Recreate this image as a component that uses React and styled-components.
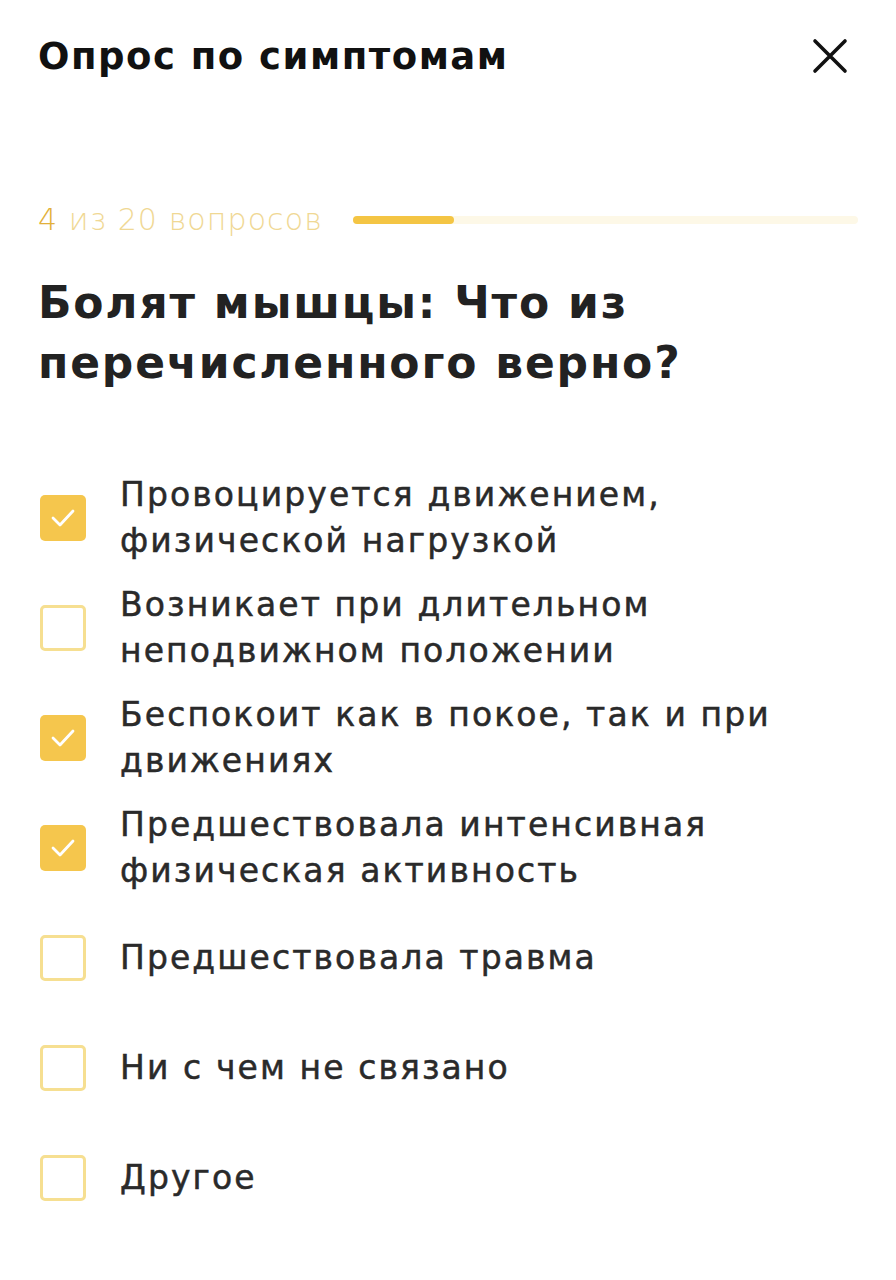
import React from 'react';
import styled, { createGlobalStyle } from 'styled-components';

const GlobalStyle = createGlobalStyle`
  body {
    margin: 0;
    background: #ffffff;
    font-family: "DejaVu Sans", Inter, sans-serif;
  }
`;

const options = [
  { text: 'Провоцируется движением,\nфизической нагрузкой', checked: true },
  { text: 'Возникает при длительном\nнеподвижном положении', checked: false },
  { text: 'Беспокоит как в покое, так и при\nдвижениях', checked: true },
  { text: 'Предшествовала интенсивная\nфизическая активность', checked: true },
  { text: 'Предшествовала травма', checked: false },
  { text: 'Ни с чем не связано', checked: false },
  { text: 'Другое', checked: false },
];

const App = () => (
  <>
    <GlobalStyle />
    <Page>
      <Header>
        <Title>Опрос по симптомам</Title>
        <CloseButton aria-label="Закрыть">
          <svg width="36" height="36" viewBox="0 0 36 36">
            <path d="M3 3 L33 33 M33 3 L3 33" stroke="#111" strokeWidth="3.6" strokeLinecap="round" />
          </svg>
        </CloseButton>
      </Header>

      <Progress>
        <ProgressLabel>
          <strong>4</strong> из 20 вопросов
        </ProgressLabel>
        <Track>
          <Fill style={{ width: `${(4 / 20) * 100}%` }} />
        </Track>
      </Progress>

      <Question>Болят мышцы: Что из<br />перечисленного верно?</Question>

      <OptionList>
        {options.map((o) => (
          <Option key={o.text}>
            <Box $checked={o.checked}>
              {o.checked && (
                <svg width="28" height="24" viewBox="0 0 28 24">
                  <path d="M4 12 L11 19 L24 5" fill="none" stroke="#fff" strokeWidth="2.8" strokeLinecap="round" strokeLinejoin="round" />
                </svg>
              )}
            </Box>
            <OptionText>{o.text}</OptionText>
          </Option>
        ))}
      </OptionList>
    </Page>
  </>
);

export default App;

const Page = styled.div`
  width: 896px;
  height: 1280px;
  box-sizing: border-box;
  padding: 30px 38px 0 38px;
  overflow: hidden;
`;

const Header = styled.div`
  display: flex;
  align-items: center;
  justify-content: space-between;
  height: 52px;
`;

const Title = styled.h1`
  margin: 0;
  font-size: 37px;
  font-weight: 700;
  letter-spacing: 1.5px;
  color: #111111;
`;

const CloseButton = styled.button`
  border: 0;
  background: none;
  padding: 0;
  margin-right: 10px;
  display: flex;
`;

const Progress = styled.div`
  display: flex;
  align-items: center;
  gap: 30px;
  margin-top: 120px;
`;

const ProgressLabel = styled.div`
  font-size: 30px;
  font-weight: 200;
  letter-spacing: 1.1px;
  color: #f0d894;
  white-space: nowrap;
  strong {
    font-weight: 200;
    color: #e2b03a;
  }
`;

const Track = styled.div`
  flex: 1;
  height: 8px;
  border-radius: 4px;
  background: #fdf8e7;
`;

const Fill = styled.div`
  height: 100%;
  border-radius: 4px;
  background: #f4c544;
`;

const Question = styled.h2`
  margin: 36px 0 0 0;
  font-size: 44px;
  line-height: 60px;
  font-weight: 700;
  letter-spacing: 1.8px;
  color: #222222;
`;

const OptionList = styled.div`
  display: flex;
  flex-direction: column;
  margin-top: 70px;
`;

const Option = styled.div`
  display: flex;
  align-items: center;
  gap: 34px;
  height: 110px;
`;

const Box = styled.div`
  flex: none;
  width: 46px;
  height: 46px;
  margin-left: 2px;
  box-sizing: border-box;
  border-radius: 5px;
  display: flex;
  align-items: center;
  justify-content: center;
  background: ${(p) => (p.$checked ? '#f5c64d' : '#ffffff')};
  border: ${(p) => (p.$checked ? 'none' : '3px solid #f6df91')};
`;

const OptionText = styled.div`
  font-size: 33px;
  line-height: 46px;
  font-weight: 400;
  letter-spacing: 2.1px;
  color: #2a2a2a;
  -webkit-text-stroke: 0.5px #2a2a2a;
  white-space: pre-line;
`;
